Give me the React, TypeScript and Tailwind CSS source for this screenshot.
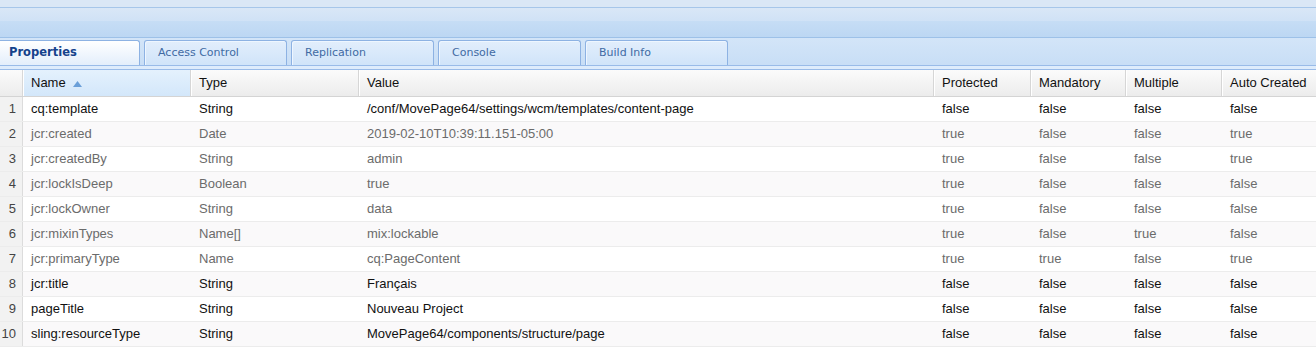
const TABS = [
  { label: "Properties", active: true },
  { label: "Access Control" },
  { label: "Replication" },
  { label: "Console" },
  { label: "Build Info" },
];

const COLUMNS = [
  { key: "name", label: "Name", width: "w-[168px]", sorted: true },
  { key: "type", label: "Type", width: "w-[168px]" },
  { key: "value", label: "Value", width: "w-[575px]" },
  { key: "protected", label: "Protected", width: "w-[97px]" },
  { key: "mandatory", label: "Mandatory", width: "w-[95px]" },
  { key: "multiple", label: "Multiple", width: "w-[96px]" },
  { key: "autoCreated", label: "Auto Created", width: "w-[94px]" },
];

const ROWS = [
  { name: "cq:template", type: "String", value: "/conf/MovePage64/settings/wcm/templates/content-page", protected: "false", mandatory: "false", multiple: "false", autoCreated: "false" },
  { name: "jcr:created", type: "Date", value: "2019-02-10T10:39:11.151-05:00", protected: "true", mandatory: "false", multiple: "false", autoCreated: "true" },
  { name: "jcr:createdBy", type: "String", value: "admin", protected: "true", mandatory: "false", multiple: "false", autoCreated: "true" },
  { name: "jcr:lockIsDeep", type: "Boolean", value: "true", protected: "true", mandatory: "false", multiple: "false", autoCreated: "false" },
  { name: "jcr:lockOwner", type: "String", value: "data", protected: "true", mandatory: "false", multiple: "false", autoCreated: "false" },
  { name: "jcr:mixinTypes", type: "Name[]", value: "mix:lockable", protected: "true", mandatory: "false", multiple: "true", autoCreated: "false" },
  { name: "jcr:primaryType", type: "Name", value: "cq:PageContent", protected: "true", mandatory: "true", multiple: "false", autoCreated: "true" },
  { name: "jcr:title", type: "String", value: "Français", protected: "false", mandatory: "false", multiple: "false", autoCreated: "false" },
  { name: "pageTitle", type: "String", value: "Nouveau Project", protected: "false", mandatory: "false", multiple: "false", autoCreated: "false" },
  { name: "sling:resourceType", type: "String", value: "MovePage64/components/structure/page", protected: "false", mandatory: "false", multiple: "false", autoCreated: "false" },
];

export default function App() {
  return (
    <div className="w-[1316px] h-[347px] overflow-hidden bg-white font-['Liberation_Sans',Arial,sans-serif]">
      {/* top toolbar bands */}
      <div className="h-[7px] bg-[#dae7f6]" />
      <div className="h-px bg-[#a6c6ea]" />
      <div className="h-[13px] bg-gradient-to-b from-[#d9e7f7] to-[#d0e2f6]" />
      <div className="h-[16px] bg-gradient-to-b from-[#c6ddf5] to-[#bcd7f3]" />
      <div className="h-px bg-[#9dc1e8]" />

      {/* tab strip */}
      <div className="h-[27px] bg-gradient-to-b from-[#d3e5f8] to-[#c8def6] flex items-end gap-[4px] font-['DejaVu_Sans',Tahoma,sans-serif]">
        {TABS.map((tab) =>
          tab.active ? (
            <div
              key={tab.label}
              className="w-[140px] h-[25px] border-r border-t border-[#8db2e3] rounded-tr-[3px] bg-gradient-to-b from-[#ffffff] to-[#e3eefb] flex items-center pl-[9px] text-[11.5px] font-bold text-[#15428b]"
            >
              {tab.label}
            </div>
          ) : (
            <div
              key={tab.label}
              className="w-[143px] h-[25px] border border-b-0 border-[#8db2e3] rounded-t-[3px] bg-gradient-to-b from-[#e2eefc] to-[#d0e4f9] shadow-[inset_1px_1px_0_#eef6ff] flex items-center pl-[13px] text-[11px] text-[#416aa3]"
            >
              {tab.label}
            </div>
          )
        )}
      </div>
      <div className="h-px bg-[#99bbe8]" />
      <div className="h-[3px] bg-[#deecfc]" />
      <div className="h-px bg-[#99bbe8]" />

      {/* grid header */}
      <div className="flex h-[27px] bg-gradient-to-b from-[#fbfbfb] to-[#ececec] border-b border-[#d4d4d4] text-[13px] text-[#111]">
        <div className="w-[23px] border-r border-[#d8d8d8]" />
        {COLUMNS.map((col) => (
          <div
            key={col.key}
            className={`${col.width} flex items-center gap-[7px] pl-[8px] border-r border-[#d6d6d6] shadow-[inset_1px_0_0_#ffffff] ${
              col.sorted ? "bg-gradient-to-b from-[#e4f1fd] to-[#d3e7fa]" : ""
            } last:border-r-0`}
          >
            {col.label}
            {col.sorted && (
              <svg width="9" height="6" viewBox="0 0 9 6" className="mt-[1px]">
                <path d="M4.5 0 L9 6 L0 6 Z" fill="#6a9fd8" />
              </svg>
            )}
          </div>
        ))}
      </div>

      {/* rows */}
      {ROWS.map((row, i) => {
        const dim = row.protected === "true";
        return (
          <div
            key={row.name}
            className={`flex h-[25px] border-b border-[#ececec] text-[13px] ${i % 2 === 1 ? "bg-[#faf9fa]" : "bg-white"} ${
              dim ? "text-[#6b6b6b]" : "text-[#111]"
            }`}
          >
            <div className="w-[23px] shrink-0 bg-[#f2f2f2] border-r border-[#dcdcdc] flex items-center justify-end pr-[6px] text-[13px] text-[#444]">
              {i + 1}
            </div>
            {COLUMNS.map((col) => (
              <div key={col.key} className={`${col.width} shrink-0 flex items-center pl-[8px] whitespace-nowrap`}>
                {(row as any)[col.key]}
              </div>
            ))}
          </div>
        );
      })}
    </div>
  );
}
